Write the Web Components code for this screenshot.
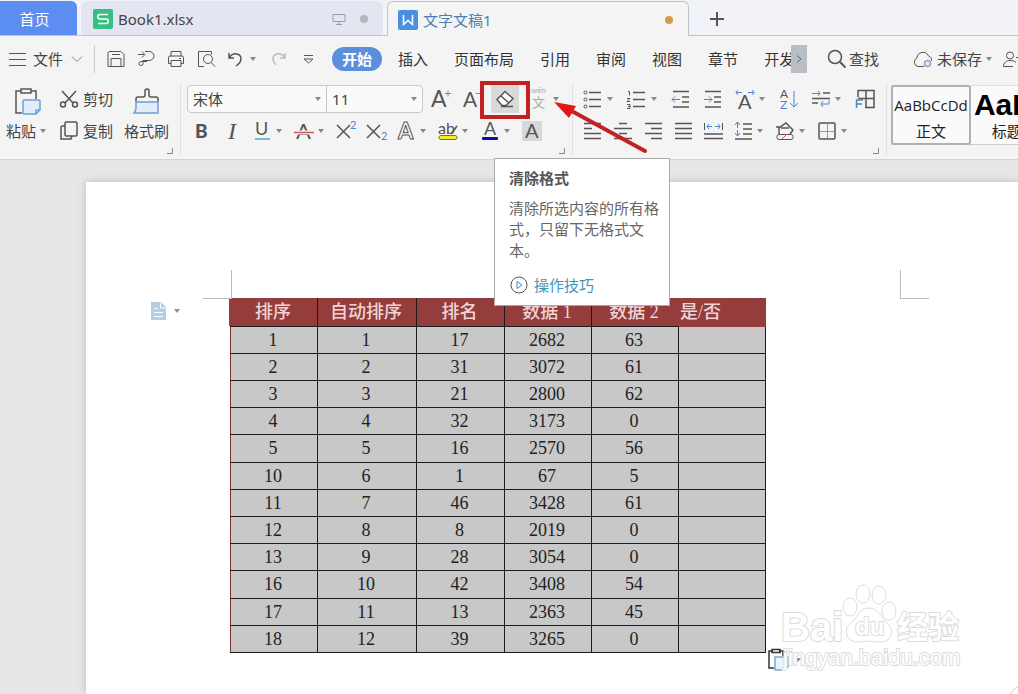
<!DOCTYPE html>
<html lang="zh-CN">
<head>
<meta charset="utf-8">
<title>文字文稿1</title>
<style>
	html, body {
		margin: 0;
		height: 100%;
	}
	body {
		font: 15px/20px "Noto Sans", "Noto Sans CJK SC", sans-serif;
		color: #444;
		background: #fff;
	}
</style>
</head>
<body>
<word-app></word-app>

<script>
const ICONS = {
	menu: [20, 20, '<path d="M1 4.500h17M1 10.500h17M1 16.500h17"/>'],
	chevron: [12, 12, '<path stroke="#888" d="M1 3.500l5 5 5-5"/>'],
	caret: [10, 10, '<path fill="#888" stroke="none" d="M2 3h6L5 7z"/>'],
	save: [20, 20, '<path d="M2 4.500a2 2 0 0 1 2-2h11l3 3v12H2zM5 17.500v-8h10v8M6 5.500h8"/>'],
	export: [20, 20, '<path d="M2 5.500h6M6 2.500l3 3-3 3M9 2.500h4a5 4.500 0 0 1 0 9H7v3a2 2 0 1 1-2-2h6"/>'],
	print: [20, 20, '<path d="M5 7.500v-5h10v5M5 14.500H2.500v-6a1.500 1.500 0 0 1 1.500-1.500h12a1.500 1.500 0 0 1 1.500 1.500v6H15M5 11.500h10v6H5zM13 9.500h2"/>'],
	preview: [20, 20, '<path d="M8 17.500H2.500v-15h13v3"/><circle cx="12" cy="10" r="4.500"/><path d="M15 13.500l4 4"/>'],
	undo: [20, 20, '<path stroke-width="1.500" d="M3 4v5h5M3.500 8.500C7 3 15 4 15 10c0 3-2 5-5 7"/>'],
	redo: [20, 20, '<path stroke="#bbb" stroke-width="1.500" d="M17 4v5h-5M16.500 8.500C13 3 5 4 5 10c0 3 1 4 3 6"/>'],
	more: [20, 20, '<path d="M6 6.500h9M6 10l4.500 4 4.500-4z"/>'],
	next: [10, 12, '<path stroke="#666" d="M3 2.500l4 3.500-4 3.500"/>'],
	search: [20, 20, '<circle cx="8" cy="8" r="6.500" stroke-width="1.500"/><path stroke-width="2" d="M13 13l5.500 5.500"/>'],
	cloud: [20, 20, '<path d="M11 17.500H5a4.500 4.500 0 0 1-1-8.500 6 6 0 0 1 11.500-2 4.500 4.500 0 0 1 3 5"/><circle cx="14.500" cy="14.500" r="3" stroke="#8aa8cc" fill="#dce8f6" stroke-width="1.500"/>'],
	person: [20, 20, '<circle cx="8" cy="6.500" r="3.500"/><path d="M11 17.500H1.500c0-4 3-6 6.500-6s5 1 6 2M14 8.500h5"/>'],
	monitor: [16, 16, '<path stroke="#999eab" d="M2 3.500h12v7H2zM8 10.500v3M5 13.500h6"/>'],
	plus: [18, 18, '<path stroke="#555" stroke-width="2" d="M9 2v14M2 9h14"/>'],
	sheetLogo: [20, 20, '<rect width="20" height="20" rx="2" fill="#35bf83" stroke="none"/><path stroke="#fff" stroke-width="1.500" d="M15 5.500H7a2 2 0 0 0 0 4.500h6a2 2 0 0 1 0 4.500H5"/>'],
	writerLogo: [20, 20, '<rect width="20" height="20" rx="2" fill="#4a90e2" stroke="none"/><path stroke="#fff" stroke-width="1.500" d="M5.500 5v9.500l4.500-4 4.500 4V5"/>'],
	paste: [30, 28, '<path stroke-width="1.500" d="M9 4H4v22h6M19 4h5v8M9 2h10v4H9z"/><path fill="#e2edfb" stroke="#6f9fd8" stroke-width="1.500" d="M12 13h15l1 1v9l-4 4H12l-1-1V14zM28 23h-4v4"/>'],
	brush: [30, 28, '<path stroke-width="1.500" d="M4 15v-3q0-2 2-2h5q2 0 2-2V4q0-2 2-2t2 2v4q0 2 2 2h5q2 0 2 2v3"/><path fill="#e2edfb" stroke="#6f9fd8" stroke-width="1.500" d="M4 15h22v11H2q2-2 2-5z"/>'],
	cut: [20, 20, '<path stroke-width="1.500" d="M3 2l11 12M17 2L6 14"/><circle cx="4" cy="15.500" r="2.500" stroke-width="1.500"/><circle cx="16" cy="15.500" r="2.500" stroke-width="1.500"/>'],
	copy: [20, 20, '<path stroke-width="1.500" d="M7 1h10l1 1v12l-1 1H7l-1-1V2zM6 5H3L2 6v12h10l1-3"/>'],
	grow: [20, 20, '<text x="0" y="18" font-size="23">A</text><path stroke="#5a8fd0" d="M14 4.500h6M17 1.500v6"/>'],
	shrink: [20, 20, '<text x="2" y="18" font-size="21">A</text><path stroke="#5a8fd0" d="M15 4.500h5"/>'],
	eraser: [20, 20, '<path fill="#fff" stroke-width="1.500" d="M2 10.500l8-8 8 7-7 7H7z"/><path stroke-width="1.500" d="M6 7l8 7M6 17.500h12"/>'],
	pinyin: [20, 20, '<text x="2" y="4" font-size="8" fill="#aaa">wén</text><text x="3" y="18" font-size="13" fill="#aaa">文</text>'],
	bold: [20, 20, '<text x="3" y="17" font-size="19" style="font-weight:900">B</text>'],
	italic: [20, 20, '<text x="6" y="18" font-size="24" style="font-family:Liberation Serif;font-style:italic">I</text>'],
	underline: [20, 20, '<text x="3" y="14" font-size="18">U</text><path stroke="#5a9fc8" stroke-width="1.500" d="M3 18h15"/>'],
	strike: [20, 20, '<text x="2" y="18" font-size="22">A</text><path stroke="#f4f4f4" stroke-width="4" d="M3 11.500h14"/><path stroke="#d05a5a" stroke-width="1.500" d="M0 11.500h20"/>'],
	sup: [20, 20, '<path stroke-width="1.500" d="M1 4l13 13M14 4L1 17"/><text x="14" y="8" font-size="11" fill="#4a86c8">2</text>'],
	sub: [20, 20, '<path stroke-width="1.500" d="M1 4l13 13M14 4L1 17"/><text x="15" y="19" font-size="11" fill="#4a86c8">2</text>'],
	effect: [20, 20, '<text x="2" y="18" font-size="22" style="font-weight:700;fill:#fff;stroke:#555">A</text>'],
	highlight: [20, 20, '<text x="0" y="13" font-size="16">ab</text><path stroke-width="1.500" d="M19 5l-6 8"/><rect x="1" y="14.500" width="18" height="4" rx="2" fill="#f5ee2a" stroke="#77772a"/>'],
	color: [20, 20, '<text x="4" y="14" font-size="18">A</text><rect x="2" y="16" width="16" height="3" rx="1" fill="#0a0ab0" stroke="none"/>'],
	shade: [20, 20, '<rect width="20" height="20" fill="#d8d8d8" stroke="none"/><text x="3" y="17" font-size="20">A</text>'],
	bullets: [20, 20, '<path stroke-width="1.500" d="M6 3.500h12M6 10.500h12M6 17.500h12"/><circle cx="2.500" cy="3.500" r="1.500"/><circle cx="2.500" cy="10.500" r="1.500"/><circle cx="2.500" cy="17.500" r="1.500"/>'],
	numbers: [20, 20, '<path stroke-width="1.500" d="M6 3.500h12M6 10.500h12M6 17.500h12"/><path d="M1 2.500h1.500v4M0 9.500h3l-3 3h3M0 15.500h3v4H0M1 17.500h2"/>'],
	outdent: [20, 20, '<path stroke-width="1.500" d="M2 2.500h16M11 8h7M11 13h7M2 18h16"/><path stroke="#4a86c8" d="M9 10.500H1M4 7.500l-3 3 3 3"/>'],
	indent: [20, 20, '<path stroke-width="1.500" d="M2 2.500h16M11 8h7M11 13h7M2 18h16"/><path stroke="#4a86c8" d="M1 10.500h8M6 7.500l3 3-3 3"/>'],
	scale: [20, 20, '<text x="3" y="20" font-size="20">A</text><path stroke="#5a7fd0" d="M1 3.500h6M3 1L1 3.500 3 6M13 3.500h6M17 1l2 2.500L17 6"/>'],
	sort: [20, 20, '<text x="1" y="9" font-size="12">A</text><text x="1" y="20" font-size="12" fill="#4a86c8">Z</text><path stroke="#4a86c8" d="M15 2v16M11 14l4 4 4-4"/>'],
	marks: [20, 20, '<path stroke-width="1.500" d="M12 4h7M1 9.500h18M1 14h6"/><path stroke="#5a7fd0" d="M1 4.500h8M7 2l2 2.500L7 7M18 11v4h-8M12 12l-2 3 2 3"/>'],
	grid: [20, 20, '<path stroke-width="1.500" d="M3 8V1.500h16v17h-9M11 1.500V18M3 9.500h16"/><path stroke="#4a86c8" stroke-width="1.500" d="M1.500 19v-8H8M1.500 15H7"/>'],
	left: [20, 20, '<path stroke-width="1.500" d="M1 2.500h17M1 7.500h8M1 12.500h17M1 17.500h17"/>'],
	center: [20, 20, '<path stroke-width="1.500" d="M6 2.500h8M1 7.500h18M6 12.500h8M1 17.500h18"/>'],
	right: [20, 20, '<path stroke-width="1.500" d="M2 2.500h17M8 7.500h11M2 12.500h17M8 17.500h11"/>'],
	justify: [20, 20, '<path stroke-width="1.500" d="M2 2.500h17M2 7.500h17M2 12.500h17M2 17.500h17"/>'],
	spread: [20, 20, '<path d="M1.500 2v7M19.500 2v7"/><path stroke="#4a86c8" d="M4 5.500h5M6 3L4 5.500 6 8M12 5.500h5M15 3l2 2.500L15 8"/><path stroke-width="1.500" d="M1 13h19M1 17.500h19"/>'],
	spacing: [20, 20, '<path stroke-width="1.500" d="M10 3h9M10 8h9M10 13h9M2 18h17"/><path stroke="#4a86c8" d="M4.500 1v6M2 4l2.500-3L7 4M4.500 9v6M2 12l2.500 3L7 12"/>'],
	fill: [20, 20, '<path stroke-width="1.500" d="M4 13V7l7-5 7 7-3 4M1 6h4M6 7h8"/><rect x="2" y="13.500" width="16" height="5" rx="2"/><path stroke="#d05a5a" d="M7 18l5-5"/>'],
	border: [20, 20, '<rect x="2" y="2" width="16" height="16" rx="1" stroke-width="1.500"/><path stroke="#999" d="M10.500 3v14M3 10.500h14"/>'],
	corner: [8, 8, '<path stroke="#888" d="M6.500 1v5.500H1"/>'],
	play: [20, 20, '<circle cx="10" cy="10" r="8"/><path stroke="#3f95bb" d="M8 6.500v7l5-3.500z"/>'],
	note: [18, 20, '<path fill="#a9cbe2" stroke="none" d="M1 1h10l5 5v13H1z"/><path stroke="#fff" d="M10.500 2v5H16M4 7.500h4M4 11.500h9M4 15.500h9"/>'],
	pasteSmall: [22, 24, '<path stroke-width="1.500" stroke="#333" d="M6 3H2v17h5M12 3h4v5M5 1.500h8v3H5z"/><path fill="#e8f3fc" stroke="#7fa9cc" stroke-width="1.500" d="M8 9h13v10l-4 3H8z"/>']
};

class WpsIcon extends HTMLElement {
	connectedCallback() {
		const [w, h, body] = ICONS[this.getAttribute('name')];
		this.shadowRoot || this.attachShadow({ mode: 'open' });
		this.shadowRoot.innerHTML = `
			<style>
				:host { display: block; flex: none; width: ${w}px; height: ${h}px; }
				svg { display: block; fill: none; stroke: #555; overflow: visible; }
				text { stroke: none; fill: #555; font-family: Lato, "Noto Sans CJK SC", sans-serif; }
				text[fill="#aaa"] { fill: #aaa; }
				text[fill="#4a86c8"] { fill: #4a86c8; }
			</style>
			<svg width="${w}" height="${h}" viewBox="0 0 ${w} ${h}" aria-hidden="true">${body}</svg>
		`;
	}
}

// icon button; attributes: icon, label, caret, pressed, tall
class ToolButton extends HTMLElement {
	connectedCallback() {
		this.shadowRoot || this.attachShadow({ mode: 'open' });
		this.shadowRoot.innerHTML = `
			<style>
				:host { display: flex; flex: none; }
				button {
					display: flex;
					align-items: center;
					gap: 2px;
					padding: 0;
					border: 0;
					background: none;
					font: inherit;
					color: inherit;
					white-space: nowrap;
				}
				.text { display: flex; align-items: center; gap: 2px; }
				:host([wide]) button { gap: 4px; }
				:host([tall]) button { flex-direction: column; gap: 4px; }
				:host([tall]) .text { height: 24px; }
				:host([pressed]) button { padding: 4px; background: #d9d9d9; }
			</style>
			<button type="button" aria-label="${this.getAttribute('label') || this.textContent}">
				<wps-icon name="${this.getAttribute('icon')}"></wps-icon>
				<span class="text"><slot></slot>${this.hasAttribute('caret') ? '<wps-icon name="caret"></wps-icon>' : ''}</span>
			</button>
		`;
		if (!this.textContent && !this.hasAttribute('caret')) {
			this.shadowRoot.querySelector('.text').remove();
		}
	}
}

class TabBar extends HTMLElement {
	constructor() {
		super();
		this.attachShadow({ mode: 'open' }).innerHTML = `
			<style>
				:host {
					display: flex;
					gap: 4px;
					height: 35px;
					padding-top: 1px;
					background: #f1f3f9;
					box-shadow: inset 0 -1px #bfc3cf;
				}
				button {
					display: flex;
					align-items: center;
					gap: 5px;
					box-sizing: border-box;
					flex: 0 1 302px;
					padding: 2px 15px 0 12px;
					border: 0;
					border-radius: 6px 6px 0 0;
					font: inherit;
					color: #444;
					background: #e3e6f1;
					border-bottom: 1px solid #bfc3cf;
					text-align: left;
				}
				.home {
					flex: 0 0 77px;
					justify-content: center;
					padding: 2px 8px 0 0;
					border-radius: 0 6px 0 0;
					background: #5c8df0;
					color: #fff;
				}
				.active {
					padding-left: 10px;
					border: 1px solid #bfc3cf;
					border-bottom: 0;
					background: #f4f4f4;
					color: #4a7fb5;
				}
				.title { flex: 1; }
				.dot { width: 8px; height: 8px; margin-left: 8px; border-radius: 4px; background: #b4b6bd; }
				.active .dot { background: #d8994f; }
				.add { flex: 0 0 48px; justify-content: center; padding: 2px 0 0; background: none; }
			</style>
			<button class="home">首页</button>
			<button><wps-icon name="sheetLogo"></wps-icon><span class="title">Book1.xlsx</span><wps-icon name="monitor"></wps-icon><span class="dot"></span></button>
			<button class="active"><wps-icon name="writerLogo"></wps-icon><span class="title">文字文稿1</span><span class="dot"></span></button>
			<button class="add" aria-label="新建"><wps-icon name="plus"></wps-icon></button>
		`;
	}
}

class MenuBar extends HTMLElement {
	constructor() {
		super();
		const tabs = ['开始', '插入', '页面布局', '引用', '审阅', '视图', '章节', '开发'];
		this.attachShadow({ mode: 'open' }).innerHTML = `
			<style>
				:host { display: flex; align-items: center; height: 46px; background: #f4f4f4; overflow: hidden; }
				button { padding: 0; border: 0; background: none; font: inherit; color: inherit; white-space: nowrap; }
				.file { display: flex; align-items: center; gap: 5px; padding: 0 11px 0 8px; }
				.file wps-icon + wps-icon, .file span { margin-right: 3px; }
				.quick { display: flex; gap: 10px; padding: 4px 14px 4px 11px; border-left: 1px solid #ccc; }
				nav { display: flex; flex: 1 1 0; gap: 6px; min-width: 0; overflow: hidden; }
				nav button { flex: none; height: 24px; padding: 0 10px; border-radius: 12px; color: #333; }
				nav .on { background: #5b8fdb; color: #fff; font-weight: 700; }
				.side { display: flex; flex: 0 0 227px; align-items: center; overflow: hidden; }
				.next { display: flex; flex: none; align-items: center; justify-content: center; width: 16px; height: 28px; margin-right: 20px; background: #b9bdc4; }
				.search { margin-right: 34px; }
				.cloud { margin-right: 8px; }
			</style>
			<button class="file"><wps-icon name="menu"></wps-icon><span>文件</span><wps-icon name="chevron"></wps-icon></button>
			<div class="quick">
				<tool-button icon="save" label="保存"></tool-button>
				<tool-button icon="export" label="输出"></tool-button>
				<tool-button icon="print" label="打印"></tool-button>
				<tool-button icon="preview" label="打印预览"></tool-button>
				<tool-button icon="undo" label="撤销" caret></tool-button>
				<tool-button icon="redo" label="恢复"></tool-button>
				<tool-button icon="more" label="更多"></tool-button>
			</div>
			<nav>${tabs.map((t, i) => `<button class="${i ? '' : 'on'}">${t}</button>`).join('')}</nav>
			<div class="side">
				<button class="next" aria-label="下一个"><wps-icon name="next"></wps-icon></button>
				<tool-button class="search" icon="search">查找</tool-button>
				<tool-button class="cloud" icon="cloud" wide caret>未保存</tool-button>
				<tool-button icon="person" label="协作"></tool-button>
			</div>
		`;
	}
}

class RibbonGroup extends HTMLElement {
	constructor() {
		super();
		this.attachShadow({ mode: 'open' }).innerHTML = `
			<style>
				:host {
					display: flex;
					flex: none;
					flex-direction: column;
					padding: 0 6px 0 var(--start, 6px);
					border-right: 1px solid #e0e0e0;
				}
				.content { padding-right: 5px; }
				.corner { align-self: flex-end; }
			</style>
			<div class="content"><slot></slot></div>
			<wps-icon class="corner" name="corner"></wps-icon>
		`;
	}
}

class FontPicker extends HTMLElement {
	constructor() {
		super();
		this.attachShadow({ mode: 'open' }).innerHTML = `
			<style>
				:host {
					display: flex;
					box-sizing: border-box;
					width: 236px;
					height: 28px;
					border: 1px solid #c8c8c8;
					border-radius: 4px;
					background: #fafafa;
				}
				label { display: flex; flex: 1; align-items: center; padding-right: 3px; }
				label:first-of-type { flex: 0 0 135px; border-right: 1px solid #c8c8c8; }
				select {
					flex: 1;
					appearance: none;
					padding: 0 0 0 5px;
					border: 0;
					background: none;
					font: inherit;
					color: inherit;
				}
			</style>
			<label><select aria-label="字体"><option>宋体</option></select><wps-icon name="caret"></wps-icon></label>
			<label><select aria-label="字号"><option>11</option></select><wps-icon name="caret"></wps-icon></label>
		`;
	}
}

class StyleGallery extends HTMLElement {
	constructor() {
		super();
		this.attachShadow({ mode: 'open' }).innerHTML = `
			<style>
				:host {
					display: flex;
					flex: 1 1 0;
					gap: 2px;
					height: 60px;
					min-width: 0;
					margin: 2px 0 0 4px;
					overflow: hidden;
					background: #fafafa;
					box-shadow: inset 0 1px #ddd, inset 0 -1px #ccc;
				}
				button {
					display: flex;
					flex: none;
					flex-direction: column;
					align-items: center;
					justify-content: space-between;
					box-sizing: border-box;
					width: 80px;
					padding: 5px 0 2px;
					border: 2px solid transparent;
					border-radius: 3px;
					background: none;
					font: inherit;
					color: #222;
				}
				.on { border-color: #b0b0b0; }
				.body { font: 15px/26px "Open Sans", sans-serif; }
				.heading { font: bold 30px/26px "Liberation Sans", sans-serif; color: #000; }
			</style>
			<button class="on"><span class="body">AaBbCcDd</span><span>正文</span></button>
			<button><span class="heading">AaBb</span><span>标题 1</span></button>
		`;
	}
}

class RibbonBar extends HTMLElement {
	constructor() {
		super();
		this.attachShadow({ mode: 'open' }).innerHTML = `
			<style>
				:host {
					display: flex;
					box-sizing: border-box;
					height: 78px;
					padding: 1px 0 3px;
					background: #f4f4f4;
					border-bottom: 1px solid #d4d4d4;
				}
				.row { display: flex; align-items: center; gap: var(--gap, 10px); height: 32px; }
				.clip { display: flex; gap: 11px; padding-top: 4px; }
				.clip > div { display: flex; flex-direction: column; margin-top: -4px; }
				.indent { padding-left: 5px; }
				font-picker { margin-right: -2px; }
			</style>
			<ribbon-group>
				<div class="clip">
					<tool-button icon="paste" tall caret>粘贴</tool-button>
					<div>
						<span class="row"><tool-button icon="cut" wide>剪切</tool-button></span>
						<span class="row"><tool-button icon="copy" wide>复制</tool-button></span>
					</div>
					<tool-button icon="brush" tall>格式刷</tool-button>
				</div>
			</ribbon-group>
			<ribbon-group>
				<div class="row">
					<font-picker></font-picker>
					<tool-button icon="grow" label="增大字号"></tool-button>
					<tool-button icon="shrink" label="减小字号"></tool-button>
					<tool-button icon="eraser" label="清除格式" pressed></tool-button>
					<tool-button icon="pinyin" label="拼音指南" caret></tool-button>
				</div>
				<div class="row indent">
					<tool-button icon="bold" label="加粗"></tool-button>
					<tool-button icon="italic" label="倾斜"></tool-button>
					<tool-button icon="underline" label="下划线" caret></tool-button>
					<tool-button icon="strike" label="删除线" caret></tool-button>
					<tool-button icon="sup" label="上标"></tool-button>
					<tool-button icon="sub" label="下标"></tool-button>
					<tool-button icon="effect" label="文字效果" caret></tool-button>
					<tool-button icon="highlight" label="突出显示" caret></tool-button>
					<tool-button icon="color" label="字体颜色" caret></tool-button>
					<tool-button icon="shade" label="字符底纹"></tool-button>
				</div>
			</ribbon-group>
			<ribbon-group style="--start: 10px">
				<div class="row" style="--gap: 12px">
					<tool-button icon="bullets" label="项目符号" caret></tool-button>
					<tool-button icon="numbers" label="编号" caret></tool-button>
					<tool-button icon="outdent" label="减少缩进量"></tool-button>
					<tool-button icon="indent" label="增加缩进量"></tool-button>
					<tool-button icon="scale" label="中文版式" caret></tool-button>
					<tool-button icon="sort" label="排序"></tool-button>
					<tool-button icon="marks" label="编辑标记" caret></tool-button>
					<tool-button icon="grid" label="制表位"></tool-button>
				</div>
				<div class="row">
					<tool-button icon="left" label="左对齐"></tool-button>
					<tool-button icon="center" label="居中对齐"></tool-button>
					<tool-button icon="right" label="右对齐"></tool-button>
					<tool-button icon="justify" label="两端对齐"></tool-button>
					<tool-button icon="spread" label="分散对齐"></tool-button>
					<tool-button icon="spacing" label="行距" caret></tool-button>
					<tool-button icon="fill" label="底纹颜色" caret></tool-button>
					<tool-button icon="border" label="边框" caret></tool-button>
				</div>
			</ribbon-group>
			<style-gallery></style-gallery>
		`;
	}
}

class RankTable extends HTMLElement {
	head = ['排序', '自动排序', '排名', '数据 1', '数据 2', '是/否'];
	rows = [
		[1, 1, 17, 2682, 63],
		[2, 2, 31, 3072, 61],
		[3, 3, 21, 2800, 62],
		[4, 4, 32, 3173, 0],
		[5, 5, 16, 2570, 56],
		[10, 6, 1, 67, 5],
		[11, 7, 46, 3428, 61],
		[12, 8, 8, 2019, 0],
		[13, 9, 28, 3054, 0],
		[16, 10, 42, 3408, 54],
		[17, 11, 13, 2363, 45],
		[18, 12, 39, 3265, 0]
	];

	constructor() {
		super();
		this.attachShadow({ mode: 'open' }).innerHTML = `
			<style>
				:host { display: block; }
				table {
					width: 536px;
					height: 355px;
					table-layout: fixed;
					border-collapse: collapse;
					font: 18px/20px "Liberation Serif", "Noto Sans CJK SC", serif;
					color: #222;
				}
				td, th { box-sizing: border-box; padding: 0 2px 0 0; text-align: center; border: 1px solid #1c1c1c; }
				td { background: #c8c8c8; }
				td:first-child { border-left-color: #7a3030; }
				th { height: 28px; font-weight: 500; color: #f0d4d4; background: #953c3c; border-top: 0; }
				th:first-child { border-left-color: #953c3c; box-shadow: -2px 0 #953c3c; }
				th:nth-last-child(2) { border-right-color: #953c3c; }
				th:last-child { padding-left: 1px; text-align: left; border-color: #953c3c; }
				.c0, .c3, .c4, .c5 { width: 87px; }
				.c1 { width: 99px; }
				.c2 { width: 88px; }
			</style>
			<table>
				<thead><tr>${this.head.map((h, i) => `<th class="c${i}">${h}</th>`).join('')}</tr></thead>
				<tbody>${this.rows.map(r => `<tr>${r.map(v => `<td>${v}</td>`).join('')}<td></td></tr>`).join('')}</tbody>
			</table>
		`;
	}
}

class PageMark extends HTMLElement {
	constructor() {
		super();
		this.attachShadow({ mode: 'open' }).innerHTML = `
			<style>
				:host { display: block; width: 180px; }
				svg { display: block; overflow: visible; }
				.line { fill: #fff; stroke: #dcdcdc; stroke-width: 2px; paint-order: stroke; font-family: "Liberation Sans", "Noto Sans CJK SC", sans-serif; font-weight: 700; }
				.url { font-weight: 400; }
				.paw { fill: #fff; stroke: #dcdcdc; }
			</style>
			<svg width="180" height="90" viewBox="0 0 180 90">
				<text class="line" x="0" y="57" font-size="40">Bai</text>
				<g class="paw">
					<ellipse cx="69" cy="23" rx="7" ry="9"/>
					<ellipse cx="82" cy="10" rx="7" ry="9"/>
					<ellipse cx="98" cy="11" rx="7" ry="9"/>
					<ellipse cx="108" cy="27" rx="7" ry="9"/>
					<path d="M88 24c-9 0-11 8-16 13s-8 8-6 14c3 9 12 7 22 6 10 1 19 3 22-6 2-6-1-9-6-14s-7-13-16-13z"/>
				</g>
				<text class="line" x="74" y="51" font-size="24">du</text>
				<text class="line" x="116" y="54" font-size="31">经验</text>
				<text class="line url" x="2" y="81" font-size="22">jingyan.baidu.com</text>
			</svg>
		`;
	}
}

class DocumentSheet extends HTMLElement {
	constructor() {
		super();
		this.attachShadow({ mode: 'open' }).innerHTML = `
			<style>
				:host { display: flex; flex: 1; padding: 22px 0 0 86px; background: #e7e7e7; }
				.page {
					position: relative;
					flex: 1;
					padding: 116px 0 41px 144px;
					background: #fff;
					box-shadow: 0 0 8px #bbb;
				}
				.crop, .note, .paste, page-mark, .ring { position: absolute; }
				.crop { top: 88px; width: 28px; height: 28px; border-bottom: 1px solid #bbb; }
				.tl { left: 117px; border-right: 1px solid #bbb; }
				.tr { left: 814px; border-left: 1px solid #bbb; }
				.note { top: 119px; left: 64px; opacity: .9; }
				.paste { top: 466px; left: 681px; }
				page-mark { top: 402px; left: 695px; }
				.ring { right: -14px; bottom: -14px; width: 20px; height: 20px; border: 1px solid #ccc; border-radius: 50%; }
				.clip { position: absolute; inset: 0; overflow: hidden; pointer-events: none; }
			</style>
			<div class="page">
				<span class="crop tl"></span>
				<span class="crop tr"></span>
				<tool-button class="note" icon="note" label="段落布局" wide caret></tool-button>
				<rank-table></rank-table>
				<tool-button class="paste" icon="pasteSmall" label="粘贴选项" wide caret></tool-button>
				<page-mark></page-mark>
				<div class="clip"><span class="ring"></span></div>
			</div>
		`;
	}
}

class ToolTip extends HTMLElement {
	constructor() {
		super();
		this.attachShadow({ mode: 'open' }).innerHTML = `
			<style>
				:host {
					display: block;
					box-sizing: border-box;
					width: 176px;
					padding: 9px 5px 10px 14px;
					border: 1px solid #a8a8a8;
					background: #fff;
					color: #666;
				}
				h3 { margin: 0 0 10px; font: inherit; font-weight: 700; color: #555; }
				p { margin: 0 0 14px; line-height: 21px; }
				a { display: flex; align-items: center; gap: 5px; color: #3f95bb; text-decoration: none; }
			</style>
			<h3><slot name="title"></slot></h3>
			<p><slot></slot></p>
			<a href="#"><wps-icon name="play"></wps-icon><slot name="link"></slot></a>
		`;
	}
}

class WordApp extends HTMLElement {
	constructor() {
		super();
		this.attachShadow({ mode: 'open' }).innerHTML = `
			<style>
				:host {
					position: relative;
					display: flex;
					flex-direction: column;
					min-height: 100%;
					overflow: hidden;
				}
				tool-tip { position: absolute; top: 158px; left: 494px; }
				.box {
					position: absolute;
					top: 81px;
					left: 480px;
					box-sizing: border-box;
					width: 50px;
					height: 38px;
					border: 4px solid #c32222;
				}
				.arrow { position: absolute; top: 95px; left: 550px; }
			</style>
			<tab-bar></tab-bar>
			<menu-bar></menu-bar>
			<ribbon-bar></ribbon-bar>
			<document-sheet></document-sheet>
			<tool-tip>
				<span slot="title">清除格式</span>
				清除所选内容的所有格式，只留下无格式文本。
				<span slot="link">操作技巧</span>
			</tool-tip>
			<span class="box"></span>
			<svg class="arrow" width="100" height="62" viewBox="0 0 100 62">
				<path d="M18 14L95 56" stroke="#c32222" stroke-width="4" stroke-linecap="round"/>
				<path d="M4 7l22 4-7 12z" fill="#e01818"/>
			</svg>
		`;
	}
}

customElements.define('wps-icon', WpsIcon);
customElements.define('tool-button', ToolButton);
customElements.define('tab-bar', TabBar);
customElements.define('menu-bar', MenuBar);
customElements.define('ribbon-group', RibbonGroup);
customElements.define('font-picker', FontPicker);
customElements.define('style-gallery', StyleGallery);
customElements.define('ribbon-bar', RibbonBar);
customElements.define('rank-table', RankTable);
customElements.define('page-mark', PageMark);
customElements.define('document-sheet', DocumentSheet);
customElements.define('tool-tip', ToolTip);
customElements.define('word-app', WordApp);
</script>
</body>
</html>
